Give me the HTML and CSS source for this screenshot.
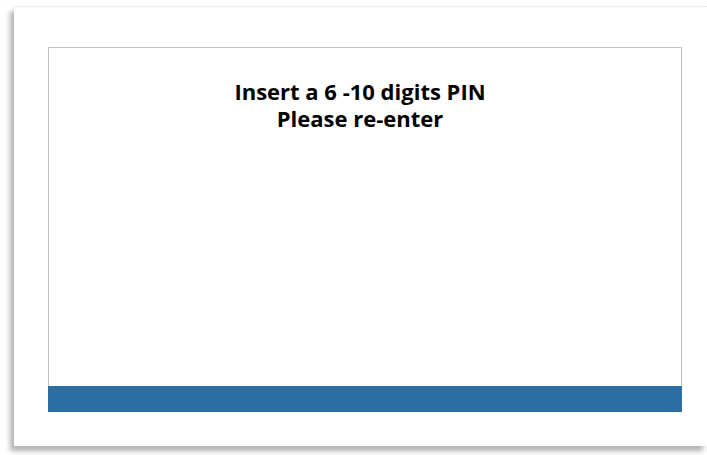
FILE: index.html
```html
<!DOCTYPE html>
<html lang="en">
<head>
<meta charset="utf-8">
<title>PIN entry</title>
<link rel="stylesheet" href="styles.css">
</head>
<body>
  <div class="sheet">
    <div class="screen">
      <div class="message">
        <p>Insert a 6 -10 digits PIN</p>
        <p>Please re-enter</p>
      </div>
      <div class="status-bar"></div>
    </div>
  </div>
</body>
</html>
```
FILE: styles.css
```css
html, body {
  margin: 0;
  padding: 0;
  background: #ffffff;
}

body {
  width: 707px;
  height: 455px;
  overflow: hidden;
  font-family: "Open Sans", "Noto Sans", sans-serif;
}

.sheet {
  box-sizing: border-box;
  margin: 6px 0 0 14px;
  width: 693px;
  height: 440px;
  padding: 40px 0 0 34px;
  background: #ffffff;
  border-top: 1px solid #ececec;
  box-shadow: -4px 5px 5px rgba(0, 0, 0, 0.3);
}

.screen {
  box-sizing: border-box;
  width: 634px;
  height: 365px;
  border: 1px solid #c2c2c2;
  border-bottom: none;
  display: flex;
  flex-direction: column;
}

.message {
  flex: 1;
  padding: 30px 10px 0 0;
  text-align: center;
  color: #000000;
  font-weight: 700;
  font-size: 22px;
  line-height: 27px;
}

.message p {
  margin: 0;
}

.status-bar {
  height: 26px;
  margin: 0 -1px;
  background: #2b6ea3;
}
```
